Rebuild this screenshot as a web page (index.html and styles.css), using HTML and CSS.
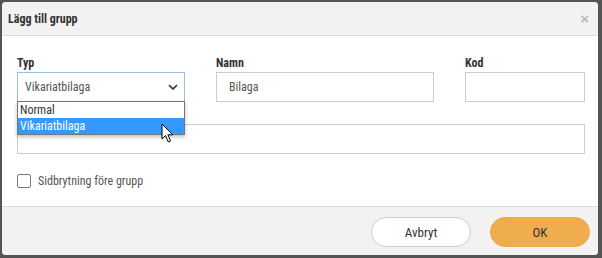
FILE: index.html
```html
<!DOCTYPE html>
<html>
<head>
    <meta charset="utf-8"/>
    <title>Lägg till grupp</title>
    <link rel="stylesheet" href="styles.css">
</head>
<body>
<div class="modal">
    <div class="modal-header">
        <div class="modal-title">Lägg till grupp</div>
        <span class="modal-close">&times;</span>
    </div>
    <div class="modal-body">
        <div class="form-row">
            <div class="field field-type">
                <label class="field-label">Typ</label>
                <div class="select open">
                    <span class="select-value">Vikariatbilaga</span>
                    <svg class="select-arrow" width="10" height="7" viewBox="0 0 10 7">
                        <path d="M1 1.2 L5 5 L9 1.2" fill="none" stroke="#444" stroke-width="1.8"/>
                    </svg>
                    <ul class="select-list">
                        <li>Normal</li>
                        <li class="selected">Vikariatbilaga</li>
                    </ul>
                    <svg class="cursor" width="14" height="21" viewBox="0 0 14 21">
                        <path d="M1 1 L1 16 L4.5 12.6 L7.3 19 L9.6 18 L6.9 11.8 L11.8 11.8 Z" fill="#fff" stroke="#000" stroke-width="1" stroke-linejoin="round"/>
                    </svg>
                </div>
            </div>
            <div class="field">
                <label class="field-label">Namn</label>
                <div class="input">Bilaga</div>
            </div>
            <div class="field">
                <label class="field-label">Kod</label>
                <div class="input"></div>
            </div>
        </div>
        <div class="field field-wide">
            <label class="field-label">Beskrivning</label>
            <div class="input"></div>
        </div>
        <label class="checkbox">
            <span class="checkbox-box"></span>
            <span>Sidbrytning före grupp</span>
        </label>
    </div>
    <div class="modal-footer">
        <button class="btn btn-default">Avbryt</button>
        <button class="btn btn-primary">OK</button>
    </div>
</div>
</body>
</html>
```

FILE: styles.css
```css
html,
body {
    height: 100%;
    margin: 0;
    padding: 0;
}

body {
    background: #555;
    font-family: "Roboto Condensed", "Liberation Sans Narrow", Roboto, sans-serif;
    font-size: 12px;
    color: #333;
    padding: 2px 4px 3px 2px;
    box-sizing: border-box;
}

.modal {
    height: 100%;
    background: #fff;
    border-radius: 4px;
    display: flex;
    flex-direction: column;
    overflow: hidden;
}

.modal-header {
    height: 33px;
    background: #f2f2f2;
    border-bottom: 1px solid #ddd;
    display: flex;
    align-items: center;
    justify-content: space-between;
    padding: 0 9px 0 6px;
}

.modal-title {
    font-weight: bold;
    font-size: 12px;
    color: #333;
}

.modal-close {
    color: #bbb;
    font-family: "Liberation Sans", sans-serif;
    font-weight: bold;
    font-size: 15px;
}

.modal-body {
    flex: 1;
    padding: 20px 13px 0 15px;
}

.form-row {
    display: grid;
    grid-template-columns: 168px 218px 120px;
    column-gap: 31px;
}

.field-label {
    display: block;
    height: 16px;
    font-weight: bold;
    color: #333;
}

.input,
.select {
    height: 30px;
    box-sizing: border-box;
    border: 1px solid #ccc;
    padding: 0 12px;
    display: flex;
    align-items: center;
    color: #555;
}

.select {
    position: relative;
    border-color: #9cc0e4;
    padding: 0 6px 0 7px;
    justify-content: space-between;
}

.select-list {
    position: absolute;
    left: -1px;
    right: -1px;
    top: 28px;
    margin: 0;
    padding: 0;
    list-style: none;
    background: #fff;
    border: 1px solid #767676;
    box-shadow: 0 2px 4px rgba(0, 0, 0, 0.25);
    z-index: 2;
}

.select-list li {
    height: 16px;
    line-height: 16px;
    padding: 0 2px;
    color: #333;
}

.select-list li.selected {
    background: #3399ff;
    color: #fff;
}

.cursor {
    position: absolute;
    left: 143px;
    top: 50px;
    z-index: 3;
}

.field-wide {
    margin-top: 6px;
}

.field-wide .field-label {
    visibility: hidden;
}

.checkbox {
    display: flex;
    align-items: center;
    gap: 7px;
    margin-top: 20px;
    color: #555;
}

.checkbox-box {
    width: 12px;
    height: 12px;
    border: 1px solid #777;
    border-radius: 2px;
    background: #fff;
}

.modal-footer {
    height: 49px;
    background: #f2f2f2;
    border-top: 1px solid #ddd;
    display: flex;
    justify-content: flex-end;
    align-items: flex-start;
    gap: 19px;
    padding: 10px 8px 0 0;
    box-sizing: border-box;
}

.btn {
    width: 100px;
    height: 30px;
    border-radius: 15px;
    font-family: inherit;
    font-size: 13px;
    color: #333;
    cursor: pointer;
}

.btn-default {
    background: #fff;
    border: 1px solid #ccc;
}

.btn-primary {
    background: #f0ad4e;
    border: 1px solid #eea847;
}
```
